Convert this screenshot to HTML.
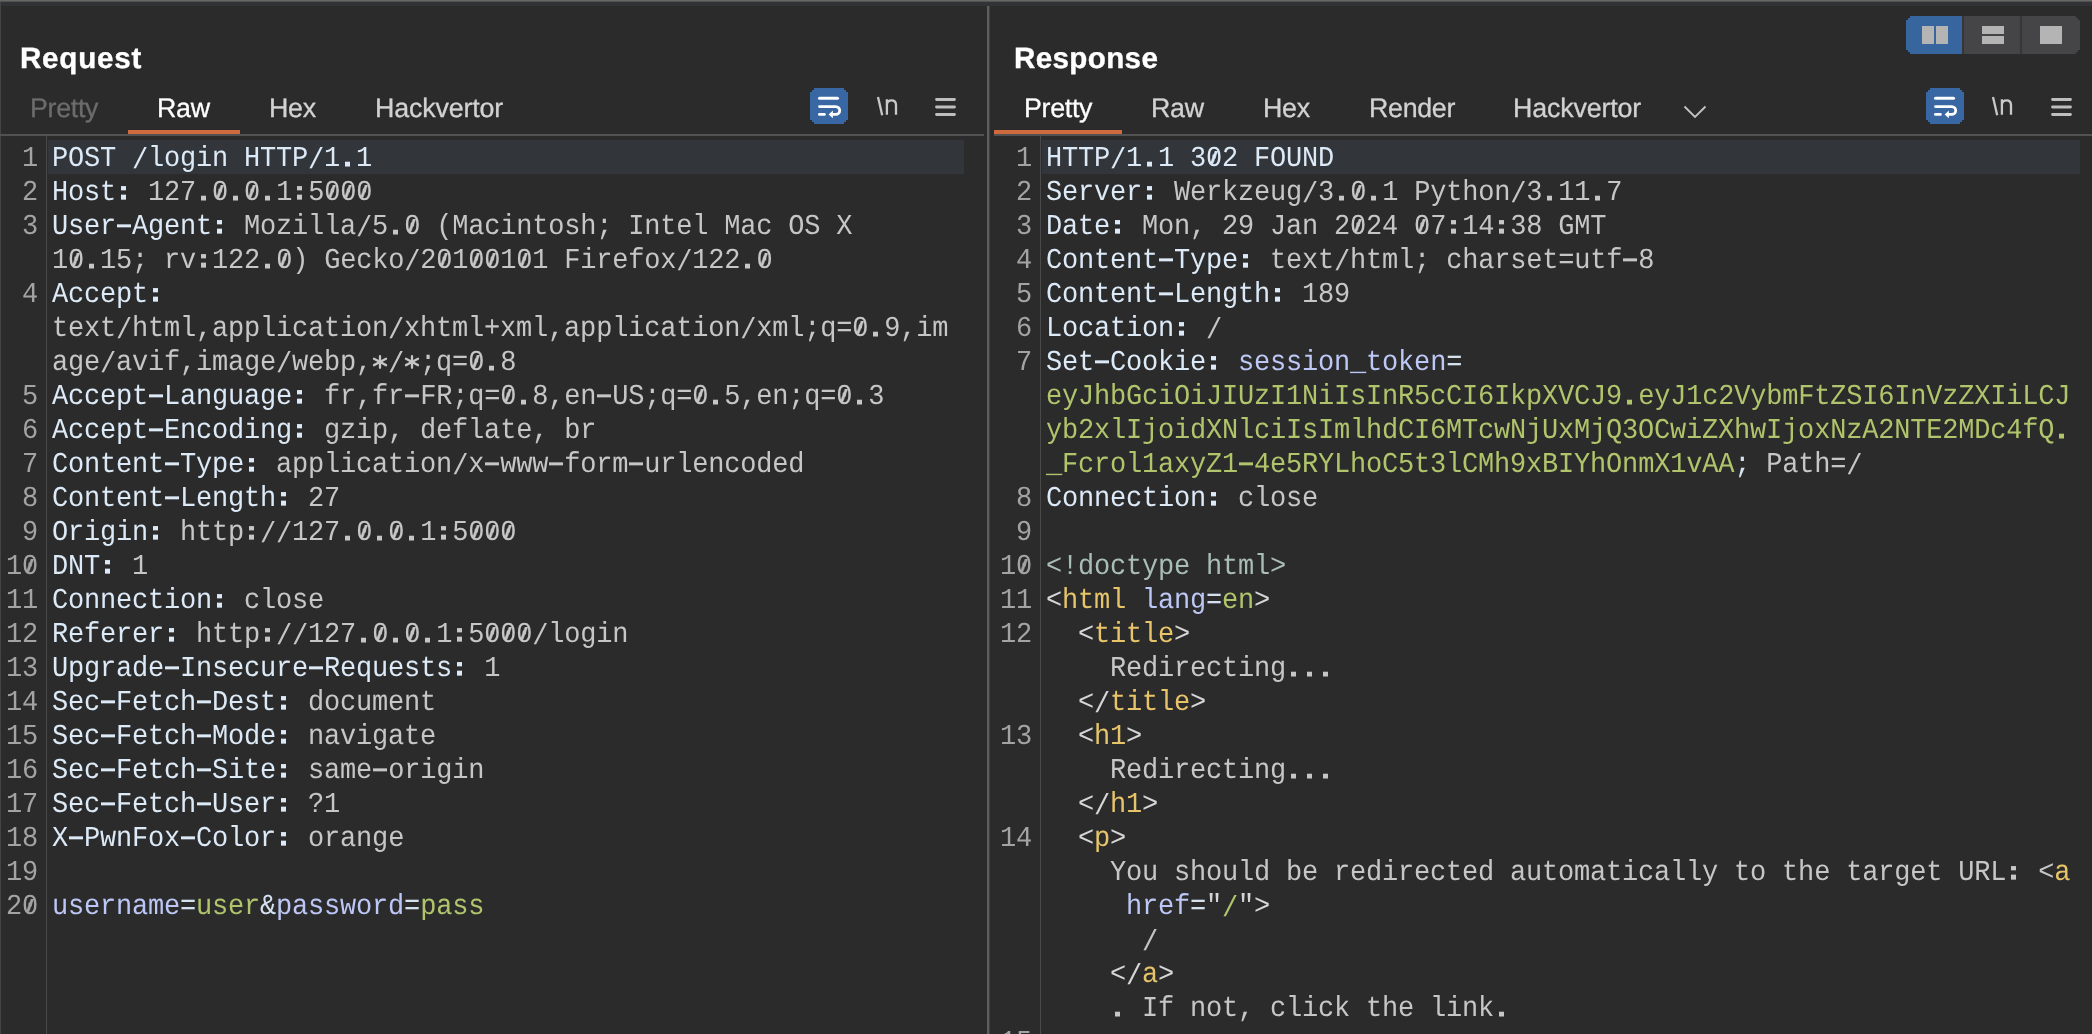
<!DOCTYPE html>
<html><head><meta charset="utf-8"><style>
html,body{margin:0;padding:0;}
.cl,.ln,.tab,.title{will-change:transform;}
body{width:2092px;height:1034px;overflow:hidden;background:#2b2b2b;position:relative;font-family:"Liberation Sans",sans-serif;text-rendering:geometricPrecision;}
.a{position:absolute;}
.title{position:absolute;font-weight:bold;-webkit-text-stroke:0.35px #fff;font-size:29.6px;color:#ffffff;line-height:36px;white-space:pre;}
.tab{position:absolute;font-size:26.8px;letter-spacing:-0.3px;-webkit-text-stroke:0.3px currentColor;color:#d2d2d2;line-height:30px;white-space:pre;}
.cl,.ln{position:absolute;font-family:"Liberation Mono",monospace;font-size:27px;letter-spacing:-0.2px;line-height:34px;height:34px;white-space:pre;padding-top:3px;box-sizing:border-box;transform:scaleY(1.07);transform-origin:0 26.2px;}
.ln{width:60px;text-align:right;color:#a3a3a3;}
.hdr{color:#dce9f7;} .val{color:#c6c6c6;} .lav{color:#bcc7f5;} .grn{color:#afc46b;}
.tag{color:#e7c46a;} .doct{color:#a9bdb7;} .punct{color:#d6d6d6;} .eq{color:#d4e2f0;}
.hy{-webkit-text-fill-color:transparent;background-image:linear-gradient(currentColor,currentColor);background-repeat:no-repeat;background-size:14px 2.8px;background-position:1px 12.0px;}
.z{background-image:linear-gradient(112deg,transparent 39%,currentColor 46%,currentColor 54%,transparent 61%);background-repeat:no-repeat;background-size:16px 12px;background-position:0 7px;}
.sl{position:relative;top:1.8px;}
.ast{vertical-align:-4.8px;}
.dt{-webkit-text-fill-color:transparent;background:linear-gradient(currentColor,currentColor) no-repeat 4.6px 16.5px/5px 4.5px;}
.cn{-webkit-text-fill-color:transparent;background:linear-gradient(currentColor,currentColor) no-repeat 4.9px 7.9px/5.2px 4.4px,linear-gradient(currentColor,currentColor) no-repeat 4.9px 16.4px/5.2px 4.7px;}
.wbtn{position:absolute;width:38px;height:36px;background:#3967a3;clip-path:polygon(0 4px,2px 4px,2px 2px,4px 2px,4px 0,34px 0,34px 2px,36px 2px,36px 4px,38px 4px,38px 32px,36px 32px,36px 34px,34px 34px,34px 36px,4px 36px,4px 34px,2px 34px,2px 32px,0 32px);}
.nl{position:absolute;font-size:25px;color:#c8c8c8;line-height:30px;}
</style></head>
<body>
<div class="a" style="left:0;top:0;width:2092px;height:1px;background:#676767"></div>
<div class="a" style="left:0;top:1px;width:2092px;height:1px;background:#525252"></div>
<div class="a" style="left:0;top:2px;width:2092px;height:4px;background:#323337"></div>
<div class="a" style="left:987px;top:6px;width:2px;height:1028px;background:#5e5e5e"></div>
<div class="a" style="left:989px;top:6px;width:1px;height:1028px;background:#3f3f3f"></div>
<div class="a" style="left:0;top:2px;width:1px;height:1032px;background:#444444"></div>
<div class="title" style="left:19.5px;top:41px;letter-spacing:0.75px">Request</div>
<div class="tab" style="left:30px;top:93.4px;color:#6c6c6c">Pretty</div>
<div class="tab" style="left:157px;top:93.4px;color:#ffffff">Raw</div>
<div class="tab" style="left:269px;top:93.4px">Hex</div>
<div class="tab" style="left:375px;top:93.4px;letter-spacing:-0.15px">Hackvertor</div>
<div class="a" style="left:128px;top:130px;width:112px;height:4px;background:#cf6a3e"></div>
<div class="a" style="left:0;top:134px;width:984px;height:2px;background:#525252"></div>
<div class="wbtn" style="left:810px;top:88px"><svg width="38" height="36" viewBox="0 0 38 36">
<rect x="8" y="8.8" width="21" height="3" rx="1.5" fill="#ffffff"/>
<path d="M9.5 18.6 H25.8 A3.9 3.9 0 0 1 25.8 26.4 H22" fill="none" stroke="#ffffff" stroke-width="2.8" stroke-linecap="round"/>
<rect x="8" y="25" width="7.8" height="2.8" rx="1.4" fill="#ffffff"/>
<path d="M18.6 26.4 L22.9 22.5 L22.9 30.3 Z" fill="#ffffff"/>
</svg></div>
<svg class="a" style="left:876px;top:96px" width="24" height="22" viewBox="0 0 24 22">
<path d="M2 1.1 L6.2 19.3" stroke="#c8c8c8" stroke-width="2.3" fill="none"/>
<path d="M10.9 3.2 V18.8 M10.9 8.6 Q11.4 4.3 15.5 4.3 Q20 4.3 20 9 V18.8" stroke="#c8c8c8" stroke-width="2.3" fill="none"/>
</svg>
<svg class="a" style="left:935px;top:98px" width="22" height="20" viewBox="0 0 22 20">
<path d="M1.5 1.5 H19.5 M1.5 9 H19.5 M1.5 16.5 H19.5" stroke="#bebebe" stroke-width="2.8" stroke-linecap="round" fill="none"/>
</svg>
<div class="a" style="left:46px;top:136px;width:1px;height:898px;background:#4a4a4a"></div>
<div class="a" style="left:48px;top:140px;width:916px;height:34px;background:#32363a"></div>
<div class="ln" style="top:140px;left:-22px">1</div>
<div class="cl" style="top:140px;left:52px"><span class="hdr">POST <span class="sl">/</span>login HTTP<span class="sl">/</span>1<span class="dt">.</span>1</span></div>
<div class="ln" style="top:174px;left:-22px">2</div>
<div class="cl" style="top:174px;left:52px"><span class="hdr">Host<span class="cn">:</span></span><span class="val"> 127<span class="dt">.</span><span class="z">0</span><span class="dt">.</span><span class="z">0</span><span class="dt">.</span>1<span class="cn">:</span>5<span class="z">0</span><span class="z">0</span><span class="z">0</span></span></div>
<div class="ln" style="top:208px;left:-22px">3</div>
<div class="cl" style="top:208px;left:52px"><span class="hdr">User<span class="hy">-</span>Agent<span class="cn">:</span></span><span class="val"> Mozilla<span class="sl">/</span>5<span class="dt">.</span><span class="z">0</span> (Macintosh; Intel Mac OS X</span></div>
<div class="cl" style="top:242px;left:52px"><span class="val">1<span class="z">0</span><span class="dt">.</span>15; rv<span class="cn">:</span>122<span class="dt">.</span><span class="z">0</span>) Gecko<span class="sl">/</span>2<span class="z">0</span>1<span class="z">0</span><span class="z">0</span>1<span class="z">0</span>1 Firefox<span class="sl">/</span>122<span class="dt">.</span><span class="z">0</span></span></div>
<div class="ln" style="top:276px;left:-22px">4</div>
<div class="cl" style="top:276px;left:52px"><span class="hdr">Accept<span class="cn">:</span></span></div>
<div class="cl" style="top:310px;left:52px"><span class="val">text<span class="sl">/</span>html,application<span class="sl">/</span>xhtml+xml,application<span class="sl">/</span>xml;q=<span class="z">0</span><span class="dt">.</span>9,im</span></div>
<div class="cl" style="top:344px;left:52px"><span class="val">age<span class="sl">/</span>avif,image<span class="sl">/</span>webp,<svg class="ast" width="16" height="24" viewBox="0 0 16 24"><path d="M8 6.2 V16.8 M2 8.5 L14 14.5 M2 14.5 L14 8.5" stroke="currentColor" stroke-width="2.3" stroke-linecap="round" fill="none"/></svg><span class="sl">/</span><svg class="ast" width="16" height="24" viewBox="0 0 16 24"><path d="M8 6.2 V16.8 M2 8.5 L14 14.5 M2 14.5 L14 8.5" stroke="currentColor" stroke-width="2.3" stroke-linecap="round" fill="none"/></svg>;q=<span class="z">0</span><span class="dt">.</span>8</span></div>
<div class="ln" style="top:378px;left:-22px">5</div>
<div class="cl" style="top:378px;left:52px"><span class="hdr">Accept<span class="hy">-</span>Language<span class="cn">:</span></span><span class="val"> fr,fr<span class="hy">-</span>FR;q=<span class="z">0</span><span class="dt">.</span>8,en<span class="hy">-</span>US;q=<span class="z">0</span><span class="dt">.</span>5,en;q=<span class="z">0</span><span class="dt">.</span>3</span></div>
<div class="ln" style="top:412px;left:-22px">6</div>
<div class="cl" style="top:412px;left:52px"><span class="hdr">Accept<span class="hy">-</span>Encoding<span class="cn">:</span></span><span class="val"> gzip, deflate, br</span></div>
<div class="ln" style="top:446px;left:-22px">7</div>
<div class="cl" style="top:446px;left:52px"><span class="hdr">Content<span class="hy">-</span>Type<span class="cn">:</span></span><span class="val"> application<span class="sl">/</span>x<span class="hy">-</span>www<span class="hy">-</span>form<span class="hy">-</span>urlencoded</span></div>
<div class="ln" style="top:480px;left:-22px">8</div>
<div class="cl" style="top:480px;left:52px"><span class="hdr">Content<span class="hy">-</span>Length<span class="cn">:</span></span><span class="val"> 27</span></div>
<div class="ln" style="top:514px;left:-22px">9</div>
<div class="cl" style="top:514px;left:52px"><span class="hdr">Origin<span class="cn">:</span></span><span class="val"> http<span class="cn">:</span><span class="sl">/</span><span class="sl">/</span>127<span class="dt">.</span><span class="z">0</span><span class="dt">.</span><span class="z">0</span><span class="dt">.</span>1<span class="cn">:</span>5<span class="z">0</span><span class="z">0</span><span class="z">0</span></span></div>
<div class="ln" style="top:548px;left:-22px">1<span class="z">0</span></div>
<div class="cl" style="top:548px;left:52px"><span class="hdr">DNT<span class="cn">:</span></span><span class="val"> 1</span></div>
<div class="ln" style="top:582px;left:-22px">11</div>
<div class="cl" style="top:582px;left:52px"><span class="hdr">Connection<span class="cn">:</span></span><span class="val"> close</span></div>
<div class="ln" style="top:616px;left:-22px">12</div>
<div class="cl" style="top:616px;left:52px"><span class="hdr">Referer<span class="cn">:</span></span><span class="val"> http<span class="cn">:</span><span class="sl">/</span><span class="sl">/</span>127<span class="dt">.</span><span class="z">0</span><span class="dt">.</span><span class="z">0</span><span class="dt">.</span>1<span class="cn">:</span>5<span class="z">0</span><span class="z">0</span><span class="z">0</span><span class="sl">/</span>login</span></div>
<div class="ln" style="top:650px;left:-22px">13</div>
<div class="cl" style="top:650px;left:52px"><span class="hdr">Upgrade<span class="hy">-</span>Insecure<span class="hy">-</span>Requests<span class="cn">:</span></span><span class="val"> 1</span></div>
<div class="ln" style="top:684px;left:-22px">14</div>
<div class="cl" style="top:684px;left:52px"><span class="hdr">Sec<span class="hy">-</span>Fetch<span class="hy">-</span>Dest<span class="cn">:</span></span><span class="val"> document</span></div>
<div class="ln" style="top:718px;left:-22px">15</div>
<div class="cl" style="top:718px;left:52px"><span class="hdr">Sec<span class="hy">-</span>Fetch<span class="hy">-</span>Mode<span class="cn">:</span></span><span class="val"> navigate</span></div>
<div class="ln" style="top:752px;left:-22px">16</div>
<div class="cl" style="top:752px;left:52px"><span class="hdr">Sec<span class="hy">-</span>Fetch<span class="hy">-</span>Site<span class="cn">:</span></span><span class="val"> same<span class="hy">-</span>origin</span></div>
<div class="ln" style="top:786px;left:-22px">17</div>
<div class="cl" style="top:786px;left:52px"><span class="hdr">Sec<span class="hy">-</span>Fetch<span class="hy">-</span>User<span class="cn">:</span></span><span class="val"> ?1</span></div>
<div class="ln" style="top:820px;left:-22px">18</div>
<div class="cl" style="top:820px;left:52px"><span class="hdr">X<span class="hy">-</span>PwnFox<span class="hy">-</span>Color<span class="cn">:</span></span><span class="val"> orange</span></div>
<div class="ln" style="top:854px;left:-22px">19</div>
<div class="ln" style="top:888px;left:-22px">2<span class="z">0</span></div>
<div class="cl" style="top:888px;left:52px"><span class="lav">username</span><span class="eq">=</span><span class="grn">user</span><span class="eq">&amp;</span><span class="lav">password</span><span class="eq">=</span><span class="grn">pass</span></div>
<div class="title" style="left:1013.5px;top:41px;letter-spacing:0.35px">Response</div>
<div class="tab" style="left:1024px;top:93.4px;color:#ffffff">Pretty</div>
<div class="tab" style="left:1151px;top:93.4px">Raw</div>
<div class="tab" style="left:1263px;top:93.4px">Hex</div>
<div class="tab" style="left:1369px;top:93.4px">Render</div>
<div class="tab" style="left:1513px;top:93.4px;letter-spacing:-0.15px">Hackvertor</div>
<svg class="a" style="left:1682px;top:102px" width="26" height="18" viewBox="0 0 26 18"><path d="M2.5 4.5 L13 15 L23.5 4.5" fill="none" stroke="#c2c2c2" stroke-width="1.9"/></svg>
<div class="a" style="left:994px;top:130px;width:128px;height:4px;background:#cf6a3e"></div>
<div class="a" style="left:994px;top:134px;width:1098px;height:2px;background:#525252"></div>
<div class="wbtn" style="left:1926px;top:88px"><svg width="38" height="36" viewBox="0 0 38 36">
<rect x="8" y="8.8" width="21" height="3" rx="1.5" fill="#ffffff"/>
<path d="M9.5 18.6 H25.8 A3.9 3.9 0 0 1 25.8 26.4 H22" fill="none" stroke="#ffffff" stroke-width="2.8" stroke-linecap="round"/>
<rect x="8" y="25" width="7.8" height="2.8" rx="1.4" fill="#ffffff"/>
<path d="M18.6 26.4 L22.9 22.5 L22.9 30.3 Z" fill="#ffffff"/>
</svg></div>
<svg class="a" style="left:1991px;top:96px" width="24" height="22" viewBox="0 0 24 22">
<path d="M2 1.1 L6.2 19.3" stroke="#c8c8c8" stroke-width="2.3" fill="none"/>
<path d="M10.9 3.2 V18.8 M10.9 8.6 Q11.4 4.3 15.5 4.3 Q20 4.3 20 9 V18.8" stroke="#c8c8c8" stroke-width="2.3" fill="none"/>
</svg>
<svg class="a" style="left:2051px;top:98px" width="22" height="20" viewBox="0 0 22 20">
<path d="M1.5 1.5 H19.5 M1.5 9 H19.5 M1.5 16.5 H19.5" stroke="#bebebe" stroke-width="2.8" stroke-linecap="round" fill="none"/>
</svg>
<div class="a" style="left:1040px;top:136px;width:1px;height:898px;background:#4a4a4a"></div>
<div class="a" style="left:1042px;top:140px;width:1038px;height:34px;background:#32363a"></div>
<div class="ln" style="top:140px;left:972px">1</div>
<div class="cl" style="top:140px;left:1046px"><span class="hdr">HTTP<span class="sl">/</span>1<span class="dt">.</span>1 3<span class="z">0</span>2 FOUND</span></div>
<div class="ln" style="top:174px;left:972px">2</div>
<div class="cl" style="top:174px;left:1046px"><span class="hdr">Server<span class="cn">:</span></span><span class="val"> Werkzeug<span class="sl">/</span>3<span class="dt">.</span><span class="z">0</span><span class="dt">.</span>1 Python<span class="sl">/</span>3<span class="dt">.</span>11<span class="dt">.</span>7</span></div>
<div class="ln" style="top:208px;left:972px">3</div>
<div class="cl" style="top:208px;left:1046px"><span class="hdr">Date<span class="cn">:</span></span><span class="val"> Mon, 29 Jan 2<span class="z">0</span>24 <span class="z">0</span>7<span class="cn">:</span>14<span class="cn">:</span>38 GMT</span></div>
<div class="ln" style="top:242px;left:972px">4</div>
<div class="cl" style="top:242px;left:1046px"><span class="hdr">Content<span class="hy">-</span>Type<span class="cn">:</span></span><span class="val"> text<span class="sl">/</span>html; charset=utf<span class="hy">-</span>8</span></div>
<div class="ln" style="top:276px;left:972px">5</div>
<div class="cl" style="top:276px;left:1046px"><span class="hdr">Content<span class="hy">-</span>Length<span class="cn">:</span></span><span class="val"> 189</span></div>
<div class="ln" style="top:310px;left:972px">6</div>
<div class="cl" style="top:310px;left:1046px"><span class="hdr">Location<span class="cn">:</span></span><span class="val"> <span class="sl">/</span></span></div>
<div class="ln" style="top:344px;left:972px">7</div>
<div class="cl" style="top:344px;left:1046px"><span class="hdr">Set<span class="hy">-</span>Cookie<span class="cn">:</span></span><span class="val"> </span><span class="lav">session_token</span><span class="eq">=</span></div>
<div class="cl" style="top:378px;left:1046px"><span class="grn">eyJhbGciOiJIUzI1NiIsInR5cCI6IkpXVCJ9<span class="dt">.</span>eyJ1c2VybmFtZSI6InVzZXIiLCJ</span></div>
<div class="cl" style="top:412px;left:1046px"><span class="grn">yb2xlIjoidXNlciIsImlhdCI6MTcwNjUxMjQ3OCwiZXhwIjoxNzA2NTE2MDc4fQ<span class="dt">.</span></span></div>
<div class="cl" style="top:446px;left:1046px"><span class="grn">_Fcrol1axyZ1<span class="hy">-</span>4e5RYLhoC5t3lCMh9xBIYhOnmX1vAA</span><span class="eq">;</span><span class="val"> Path=<span class="sl">/</span></span></div>
<div class="ln" style="top:480px;left:972px">8</div>
<div class="cl" style="top:480px;left:1046px"><span class="hdr">Connection<span class="cn">:</span></span><span class="val"> close</span></div>
<div class="ln" style="top:514px;left:972px">9</div>
<div class="ln" style="top:548px;left:972px">1<span class="z">0</span></div>
<div class="cl" style="top:548px;left:1046px"><span class="doct">&lt;!doctype html&gt;</span></div>
<div class="ln" style="top:582px;left:972px">11</div>
<div class="cl" style="top:582px;left:1046px"><span class="punct">&lt;</span><span class="tag">html</span><span class="punct"> </span><span class="lav">lang</span><span class="eq">=</span><span class="grn">en</span><span class="punct">&gt;</span></div>
<div class="ln" style="top:616px;left:972px">12</div>
<div class="cl" style="top:616px;left:1046px"><span class="punct">  &lt;</span><span class="tag">title</span><span class="punct">&gt;</span></div>
<div class="cl" style="top:650px;left:1046px"><span class="val">    Redirecting<span class="dt">.</span><span class="dt">.</span><span class="dt">.</span></span></div>
<div class="cl" style="top:684px;left:1046px"><span class="punct">  &lt;<span class="sl">/</span></span><span class="tag">title</span><span class="punct">&gt;</span></div>
<div class="ln" style="top:718px;left:972px">13</div>
<div class="cl" style="top:718px;left:1046px"><span class="punct">  &lt;</span><span class="tag">h1</span><span class="punct">&gt;</span></div>
<div class="cl" style="top:752px;left:1046px"><span class="val">    Redirecting<span class="dt">.</span><span class="dt">.</span><span class="dt">.</span></span></div>
<div class="cl" style="top:786px;left:1046px"><span class="punct">  &lt;<span class="sl">/</span></span><span class="tag">h1</span><span class="punct">&gt;</span></div>
<div class="ln" style="top:820px;left:972px">14</div>
<div class="cl" style="top:820px;left:1046px"><span class="punct">  &lt;</span><span class="tag">p</span><span class="punct">&gt;</span></div>
<div class="cl" style="top:854px;left:1046px"><span class="val">    You should be redirected automatically to the target URL<span class="cn">:</span> &lt;</span><span class="tag">a</span></div>
<div class="cl" style="top:888px;left:1046px"><span class="val">     </span><span class="lav">href</span><span class="eq">=</span><span class="punct">&quot;</span><span class="grn"><span class="sl">/</span></span><span class="punct">&quot;</span><span class="punct">&gt;</span></div>
<div class="cl" style="top:922px;left:1046px"><span class="val">      <span class="sl">/</span></span></div>
<div class="cl" style="top:956px;left:1046px"><span class="punct">    &lt;<span class="sl">/</span></span><span class="tag">a</span><span class="punct">&gt;</span></div>
<div class="cl" style="top:990px;left:1046px"><span class="val">    <span class="dt">.</span> If not, click the link<span class="dt">.</span></span></div>
<div class="ln" style="top:1024px;left:972px">15</div>
<div class="a" style="left:1906px;top:16px;width:174px;height:38px;background:#454547;overflow:hidden;clip-path:polygon(0 4px,2px 4px,2px 2px,4px 2px,4px 0,170px 0,170px 2px,172px 2px,172px 4px,174px 4px,174px 34px,172px 34px,172px 36px,170px 36px,170px 38px,4px 38px,4px 36px,2px 36px,2px 34px,0 34px)"><div class="a" style="left:0;top:0;width:56px;height:38px;background:#37659e"></div><div class="a" style="left:56px;top:0;width:2px;height:38px;background:#363638"></div><div class="a" style="left:114px;top:0;width:2px;height:38px;background:#363638"></div><div class="a" style="left:16px;top:10px;width:12px;height:18px;background:#b4b4b4"></div><div class="a" style="left:30px;top:10px;width:12px;height:18px;background:#b4b4b4"></div><div class="a" style="left:76px;top:10px;width:22px;height:8px;background:#b4b4b4"></div><div class="a" style="left:76px;top:20px;width:22px;height:8px;background:#b4b4b4"></div><div class="a" style="left:134px;top:10px;width:22px;height:18px;background:#b4b4b4"></div></div>
</body></html>
